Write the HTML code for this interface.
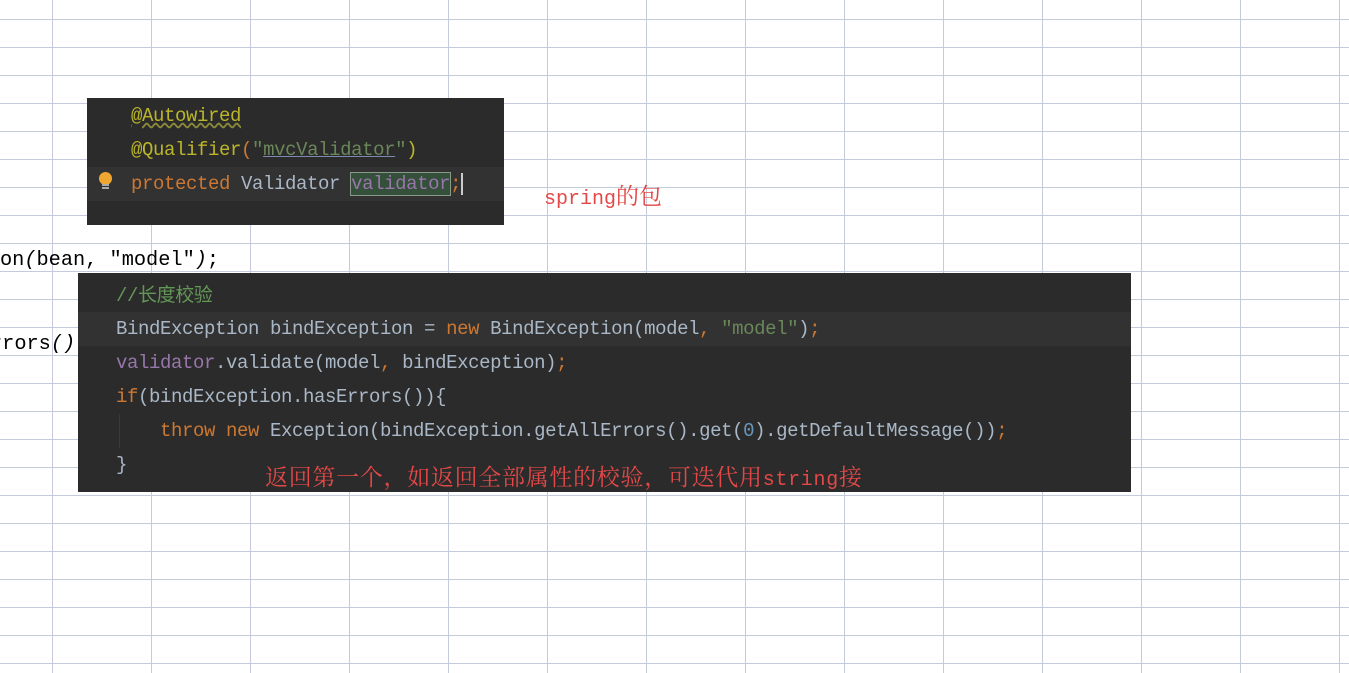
<!DOCTYPE html>
<html><head><meta charset="utf-8"><style>
html,body{margin:0;padding:0;}
body{width:1349px;height:673px;position:relative;overflow:hidden;background:#fff;
background-image:linear-gradient(to right,#c6cbdb 1px,transparent 1px),linear-gradient(to bottom,#c6cbdb 1px,transparent 1px);
background-size:99px 28px;background-position:52px 19px;}
.blk{position:absolute;background:#2b2b2b;}
.ln{position:absolute;left:0;right:0;height:34px;line-height:34px;font-family:"Liberation Mono","Noto Sans CJK SC",monospace;font-size:19px;letter-spacing:-0.4px;color:#a9b7c6;white-space:pre;}
.hl{background:#323232;}
.k{color:#cc7832}.a{color:#bbb529}.s{color:#6a8759}.c{color:#629755}.f{color:#9876aa}.n{color:#6897bb}
.t{position:absolute;font-family:"Liberation Mono",monospace;font-size:20.3px;color:#000;white-space:pre;}
.r{position:absolute;font-family:"Noto Serif CJK SC",serif;font-size:23px;color:#e34848;white-space:pre;line-height:30px;}
.r b{font-weight:normal;font-family:"Liberation Mono",monospace;font-size:20px;}
</style></head><body>
<div class="t" style="left:0;top:249px;">on<i>(</i>bean, "model"<i>)</i>;</div>
<div class="t" style="left:-10px;top:333px;">rrors<i>()</i></div>

<div class="blk" style="left:87px;top:98px;width:417px;height:127px;">
 <div class="ln" style="top:1px;padding-left:44px;"><span class="a" style="text-decoration:underline wavy #8a8a3a;">@Autowired</span></div>
 <div class="ln" style="top:35px;padding-left:44px;"><span class="a">@Qualifier</span><span class="k">(</span><span class="s">"<u style="text-decoration-color:#7a8ab0">mvcValidator</u>"</span><span class="a">)</span></div>
 <div class="ln hl" style="top:69px;padding-left:44px;"><span class="k">protected </span>Validator <span class="f" style="background:#344f3a;outline:1px solid #8a9a8a;">validator</span><span class="k">;</span><span style="border-left:2px solid #ccc;"></span></div>
 <div style="position:absolute;left:12px;top:74px;width:13px;height:13px;border-radius:50%;background:#f0a732;"></div>
 <div style="position:absolute;left:15px;top:86px;width:7px;height:2px;background:#aaa;box-shadow:0 3px 0 #aaa;"></div>
</div>
<div class="r" style="left:544px;top:180px;"><b>spring</b>的包</div>

<div class="blk" style="left:78px;top:273px;width:1053px;height:219px;">
 <div class="ln" style="top:6px;padding-left:38px;"><span class="c">//长度校验</span></div>
 <div class="ln hl" style="top:39px;padding-left:38px;">BindException bindException = <span class="k">new </span>BindException(model<span class="k">, </span><span class="s">"model"</span>)<span class="k">;</span></div>
 <div class="ln" style="top:73px;padding-left:38px;"><span class="f">validator</span>.validate(model<span class="k">, </span>bindException)<span class="k">;</span></div>
 <div class="ln" style="top:107px;padding-left:38px;"><span class="k">if</span>(bindException.hasErrors()){</div>
 <div class="ln" style="top:141px;padding-left:82px;"><span class="k">throw new </span>Exception(bindException.getAllErrors().get(<span class="n">0</span>).getDefaultMessage())<span class="k">;</span></div>
 <div style="position:absolute;left:41px;top:141px;width:1px;height:34px;background:#3a3a3a;"></div>
 <div class="ln" style="top:175px;padding-left:38px;">}</div>
</div>
<div class="r" style="left:265px;top:461px;letter-spacing:0.7px;">返回第一个，如返回全部属性的校验，可迭代用<b>string</b>接</div>
</body></html>
